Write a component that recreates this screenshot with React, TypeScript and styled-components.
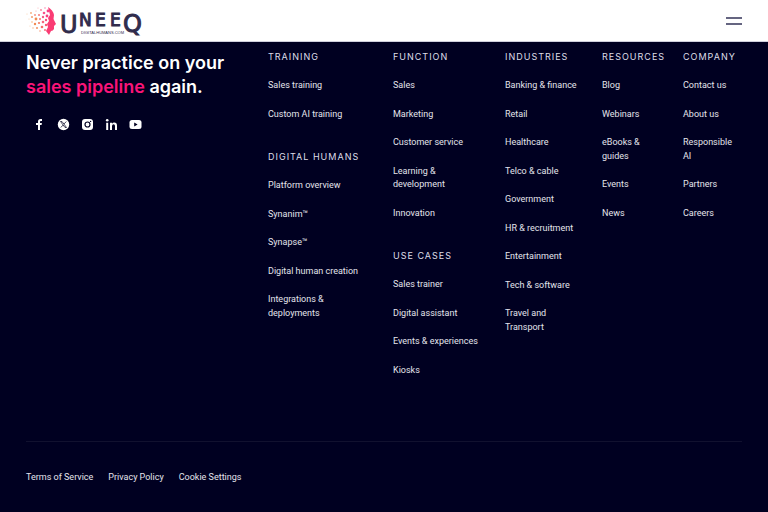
import React from "react";
import styled, { createGlobalStyle } from "styled-components";

const GlobalStyle = createGlobalStyle`
  * { box-sizing: border-box; }
  html, body, #root { min-height: 100vh; }
  body {
    margin: 0;
    background: #000021;
    font-family: Inter, "Open Sans", sans-serif;
  }
  #root { display: flex; flex-direction: column; }
`;

const Header = styled.header`
  display: flex;
  align-items: center;
  justify-content: space-between;
  height: 42px;
  padding: 0 26px;
  background: #ffffff;
  border-bottom: 1px solid #cfcfdc;
`;

const HomeLink = styled.a`
  display: flex;
`;

const MenuButton = styled.button`
  display: flex;
  padding: 0;
  border: 0;
  background: none;
  cursor: pointer;
`;

const Footer = styled.footer`
  flex: 1;
  display: flex;
  flex-direction: column;
  padding: 0 26px;
  color: #ffffff;
`;

const Columns = styled.div`
  display: grid;
  grid-template-columns: 242fr 125fr 112fr 97fr 81fr 59fr;
  padding: 8px 0 64px;
`;

const Column = styled.nav`
  display: flex;
  flex-direction: column;
  gap: 29px;
  min-width: 0;
  padding-right: 20px;

  &:last-child {
    padding-right: 0;
  }
`;

const Intro = styled.section`
  min-width: 0;
`;

const Tagline = styled.h2`
  margin: 0;
  padding-top: 1px;
  font-size: 18px;
  font-weight: 600;
  line-height: 24px;
  white-space: nowrap;
`;

const Accent = styled.span`
  color: #fa1478;
`;

const SocialList = styled.ul`
  display: flex;
  gap: 11px;
  margin: 19px 0 0;
  padding: 0 0 0 7px;
  list-style: none;
`;

const SocialLink = styled.a`
  display: flex;
  color: #ffffff;
`;

const GroupTitle = styled.h3`
  margin: 0 0 16px;
  color: #dedee8;
  font-size: 9px;
  font-weight: 400;
  line-height: 13px;
  letter-spacing: 1px;
  text-transform: uppercase;
  white-space: nowrap;
`;

const LinkList = styled.ul`
  display: flex;
  flex-direction: column;
  gap: 15px;
  margin: 0;
  padding: 0;
  list-style: none;
  font-family: Roboto, sans-serif;
  font-size: 9px;
  line-height: 1.5;
`;

const FooterLink = styled.a`
  color: #e4e4ec;
  text-decoration: none;
`;

const Legal = styled.nav`
  display: flex;
  gap: 15px;
  padding: 29px 0;
  border-top: 1px solid #11112f;
  font-family: Roboto, sans-serif;
  font-size: 9px;
  line-height: 13px;
`;

type Group = { title: string; links: string[] };

const columns: Group[][] = [
  [
    { title: "Training", links: ["Sales training", "Custom AI training"] },
    {
      title: "Digital humans",
      links: ["Platform overview", "Synanim™", "Synapse™", "Digital human creation", "Integrations & deployments"],
    },
  ],
  [
    { title: "Function", links: ["Sales", "Marketing", "Customer service", "Learning & development", "Innovation"] },
    { title: "Use cases", links: ["Sales trainer", "Digital assistant", "Events & experiences", "Kiosks"] },
  ],
  [
    {
      title: "Industries",
      links: [
        "Banking & finance", "Retail", "Healthcare", "Telco & cable", "Government",
        "HR & recruitment", "Entertainment", "Tech & software", "Travel and Transport",
      ],
    },
  ],
  [{ title: "Resources", links: ["Blog", "Webinars", "eBooks & guides", "Events", "News"] }],
  [{ title: "Company", links: ["Contact us", "About us", "Responsible AI", "Partners", "Careers"] }],
];

const dots: [number, number, number, string][] = [
  [1, 9, 0.5, "#f8c49a"], [5, 8, 0.9, "#f7a978"], [3, 14, 0.5, "#f8c49a"], [6, 12, 1, "#f49a68"],
  [10, 6, 0.6, "#f7a0a0"], [9, 10, 0.9, "#f58a78"], [12, 3, 0.6, "#f9b0b8"], [15, 5, 0.9, "#f77f95"],
  [10, 14, 1.4, "#f28a50"], [6, 17, 0.7, "#f5a060"], [4, 21, 0.5, "#f8c49a"], [13, 10, 1, "#f57a78"],
  [14, 14, 1, "#f5706f"], [9, 19, 1.2, "#f28a50"], [13, 18, 1.1, "#f27a60"], [7, 23, 0.7, "#f7b080"],
  [11, 23, 1, "#f59060"], [14, 26, 0.8, "#f9a080"], [16, 22, 1.3, "#f46a68"], [17, 17, 1.3, "#f6647c"],
  [17, 12, 1.2, "#f55a86"], [18, 8, 1.3, "#f7508a"], [19, 3, 0.8, "#f98bb0"], [22, 6, 1.4, "#f73e86"],
  [21, 11, 1.4, "#f73e80"], [20, 15, 1.2, "#f84c7c"], [20, 20, 1.2, "#f75873"], [19, 25, 1, "#f66a78"],
];

function Logo() {
  return (
    <svg width="120" height="34" viewBox="0 0 120 34" role="img" aria-label="UneeQ digitalhumans.com">
      {dots.map(([x, y, r, fill]) => (
        <circle key={`${x}-${y}`} cx={x} cy={y + 1} r={r} fill={fill} />
      ))}
      <path
        d="M22 3 Q27 6 28 11 L27.500 15 L30 20 L28 22 L28 25 Q27 27 25 27 L23 31 L20 27 L22 23 L21 20 L23 17 L22 14 L24 11 Z"
        fill="#fa3c74"
      />
      <g fill="#302c4c" stroke="#302c4c" strokeWidth="1" fontFamily='"DejaVu Sans", sans-serif' fontWeight="400">
        <text x="34" y="29" fontSize="24">U</text>
        <text x="53 69 84" y="22" fontSize="17">NEE</text>
        <text x="97" y="28" fontSize="24">Q</text>
        <text x="55" y="30" fontSize="4" stroke="none" fontFamily='"Liberation Sans", sans-serif'>DIGITALHUMANS.COM</text>
      </g>
    </svg>
  );
}

function FacebookIcon() {
  return (
    <svg width="13" height="13" viewBox="0 0 13 13" aria-hidden="true">
      <path d="M5 12 V7 H3 V5 H5 V3.500 Q5 1 7.500 1 H9 V3 H7.800 Q7 3 7 3.800 V5 H8.900 L8.600 7 H7 V12 Z" fill="currentColor" />
    </svg>
  );
}

function XIcon() {
  return (
    <svg width="13" height="13" viewBox="0 0 13 13" aria-hidden="true">
      <circle cx="6.500" cy="6.500" r="5.700" fill="currentColor" />
      <path d="M3.500 3.500 H5 L9.500 9.500 H8 Z M9.300 3.500 L7 6 M6 7.100 L3.800 9.500" fill="none" stroke="#000021" strokeWidth="0.700" />
    </svg>
  );
}

function InstagramIcon() {
  return (
    <svg width="13" height="13" viewBox="0 0 13 13" aria-hidden="true">
      <rect x="1" y="1" width="11" height="11" rx="3" fill="currentColor" />
      <circle cx="6.500" cy="6.500" r="2.500" fill="none" stroke="#000021" strokeWidth="1.200" />
      <circle cx="9.600" cy="3.400" r="0.700" fill="#000021" />
    </svg>
  );
}

function LinkedinIcon() {
  return (
    <svg width="13" height="13" viewBox="0 0 13 13" aria-hidden="true" fill="currentColor">
      <circle cx="2.200" cy="2.300" r="1.300" />
      <path d="M1.200 4.700 H3.200 V12 H1.200 Z M5 4.700 H7 V5.700 Q7.700 4.500 9.200 4.500 Q12 4.500 12 7.700 V12 H10 V8 Q10 6.300 8.600 6.300 Q7 6.300 7 8.200 V12 H5 Z" />
    </svg>
  );
}

function YoutubeIcon() {
  return (
    <svg width="13" height="13" viewBox="0 0 13 13" aria-hidden="true">
      <rect x="0.500" y="2" width="12" height="9" rx="2.500" fill="currentColor" />
      <path d="M5.200 4.600 L8.600 6.500 L5.200 8.400 Z" fill="#000021" />
    </svg>
  );
}

const socials = [
  { name: "Facebook", Icon: FacebookIcon },
  { name: "X", Icon: XIcon },
  { name: "Instagram", Icon: InstagramIcon },
  { name: "LinkedIn", Icon: LinkedinIcon },
  { name: "YouTube", Icon: YoutubeIcon },
];

export default function App() {
  return (
    <>
      <GlobalStyle />
      <Header>
        <HomeLink href="#" aria-label="UneeQ home"><Logo /></HomeLink>
        <MenuButton type="button" aria-label="Open menu">
          <svg width="16" height="12" viewBox="0 0 16 12" aria-hidden="true">
            <path d="M0 3 H16 M0 9 H16" stroke="#656581" strokeWidth="2" />
          </svg>
        </MenuButton>
      </Header>
      <Footer>
        <Columns>
          <Intro>
            <Tagline>
              Never practice on your<br />
              <Accent>sales pipeline</Accent> again.
            </Tagline>
            <SocialList>
              {socials.map(({ name, Icon }) => (
                <li key={name}><SocialLink href="#" aria-label={name}><Icon /></SocialLink></li>
              ))}
            </SocialList>
          </Intro>
          {columns.map((groups) => (
            <Column key={groups[0].title} aria-label={groups[0].title}>
              {groups.map((group) => (
                <section key={group.title}>
                  <GroupTitle>{group.title}</GroupTitle>
                  <LinkList>
                    {group.links.map((label) => (
                      <li key={label}><FooterLink href="#">{label}</FooterLink></li>
                    ))}
                  </LinkList>
                </section>
              ))}
            </Column>
          ))}
        </Columns>
        <Legal aria-label="Legal">
          <FooterLink href="#">Terms of Service</FooterLink>
          <FooterLink href="#">Privacy Policy</FooterLink>
          <FooterLink href="#">Cookie Settings</FooterLink>
        </Legal>
      </Footer>
    </>
  );
}
